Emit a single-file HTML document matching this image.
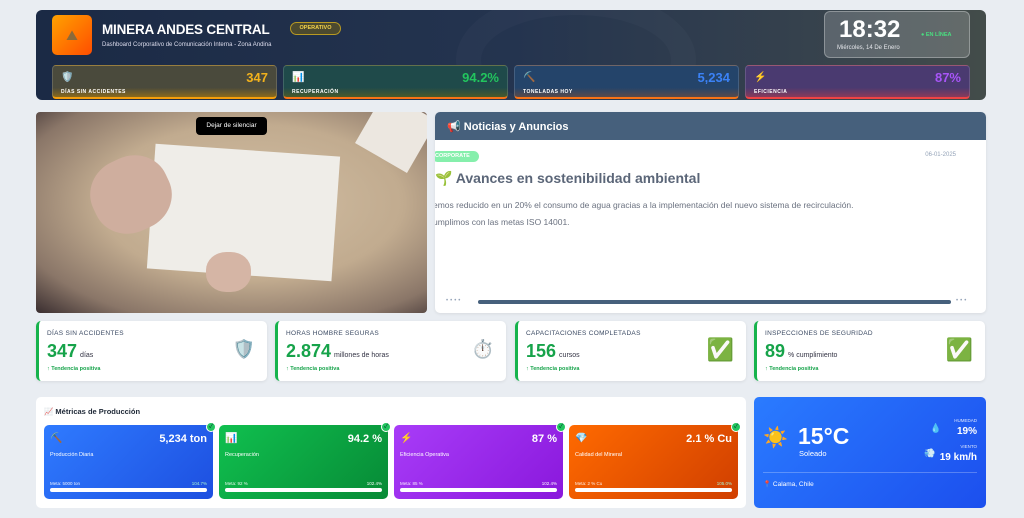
<!DOCTYPE html>
<html><head><meta charset="utf-8"><style>
*{box-sizing:border-box;margin:0;padding:0}
body{width:1024px;height:518px;overflow:hidden;background:#e9edf2;font-family:"Liberation Sans","Noto Sans CJK SC",sans-serif;position:relative}
.abs{position:absolute}
.hdr{left:36px;top:10px;width:950px;height:90px;border-radius:6px;background:linear-gradient(90deg,#1b2a45 0%,#24344f 50%,#35414d 80%,#434c4a 100%);overflow:hidden}
.stat{top:55px;height:34px;border-radius:4px;border:1px solid rgba(255,255,255,.15);color:#fff}
.stat .ic{position:absolute;left:8px;top:6px;font-size:10px}
.stat .v{position:absolute;right:8px;top:4px;font-size:13px;font-weight:bold}
.stat .l{position:absolute;left:8px;top:23px;font-size:5px;font-weight:bold;letter-spacing:.5px}
.kpi{top:321px;width:231px;height:60px;background:#fff;border-radius:5px;border-left:3px solid #16b34c;box-shadow:0 1px 3px rgba(0,0,0,.08)}
.kpi .t{position:absolute;left:8px;top:9px;font-size:6.5px;color:#3b4a63;letter-spacing:.3px}
.kpi .n{position:absolute;left:8px;top:20px;font-size:18px;font-weight:bold;color:#16a34a}
.kpi .n span{font-size:7px;font-weight:normal;color:#334;margin-left:3px}
.kpi .g{position:absolute;left:8px;top:45px;font-size:5.5px;font-weight:bold;color:#16a34a}
.kpi .e{position:absolute;right:12px;top:16px;font-size:22px}
.pc{top:425px;width:169px;height:74px;border-radius:5px;color:#fff}
.pc .ic{position:absolute;left:6px;top:8px;font-size:10px}
.pc .v{position:absolute;right:6px;top:8px;font-size:11px;font-weight:bold}
.pc .l{position:absolute;left:6px;top:27px;font-size:5.5px}
.pc .m{position:absolute;left:6px;top:56px;font-size:4.5px;opacity:.9}
.pc .p{position:absolute;right:6px;top:56px;font-size:4.5px;color:#a7f3d0}
.pc .b{position:absolute;left:6px;right:6px;top:63px;height:4px;border-radius:2px;background:#fff}
.pc .ck{position:absolute;right:-3px;top:-3px;width:10px;height:10px;border-radius:50%;background:#22c55e;border:1px solid #fff;font-size:6px;text-align:center;line-height:8px;color:#033}
</style></head><body>
<div class="abs hdr">
 <div class="abs" style="left:420px;top:-20px;width:240px;height:140px;border-radius:50%;border:25px solid rgba(255,255,255,.025)"></div>
 <div class="abs" style="left:16px;top:5px;width:40px;height:40px;border-radius:5px;background:linear-gradient(135deg,#ffa200,#ff4d00);text-align:center;line-height:40px;font-size:14px;color:#8a6a3a">⛰</div>
 <div class="abs" style="left:66px;top:12px;color:#fff;font-size:13.5px;font-weight:bold;letter-spacing:-.2px">MINERA ANDES CENTRAL</div>
 <div class="abs" style="left:254px;top:12px;width:51px;height:13px;border-radius:7px;border:1px solid #b89a22;background:rgba(120,100,20,.5);color:#f5d34a;font-size:5.5px;font-weight:bold;text-align:center;line-height:11px">OPERATIVO</div>
 <div class="abs" style="left:66px;top:32px;color:#dde;font-size:6px">Dashboard Corporativo de Comunicación Interna - Zona Andina</div>
 <div class="abs" style="left:788px;top:1px;width:146px;height:47px;border-radius:6px;background:rgba(255,255,255,.18);border:1px solid rgba(255,255,255,.3)">
  <div class="abs" style="left:14px;top:4px;color:#fff;font-size:24px;font-weight:bold">18:32</div>
  <div class="abs" style="left:96px;top:20px;color:#4ade80;font-size:5.5px;font-weight:bold">● EN LÍNEA</div>
  <div class="abs" style="left:12px;top:33px;color:#e5e7eb;font-size:6px">Miércoles, 14 De Enero</div>
 </div>
 <div class="abs stat" style="left:16px;width:225px;background:linear-gradient(180deg,#4a4a3c 70%,#8a6a1c);border-bottom:2px solid #f59e0b"><span class="ic">🛡️</span><span class="v" style="color:#f2b21c">347</span><span class="l">DÍAS SIN ACCIDENTES</span></div>
 <div class="abs stat" style="left:247px;width:225px;background:linear-gradient(180deg,#1f4a4a 70%,#4a5a2a);border-bottom:2px solid #f97316"><span class="ic">📊</span><span class="v" style="color:#22c55e">94.2%</span><span class="l">RECUPERACIÓN</span></div>
 <div class="abs stat" style="left:478px;width:225px;background:linear-gradient(180deg,#24446a 70%,#5a4a4a);border-bottom:2px solid #f97316"><span class="ic">⛏️</span><span class="v" style="color:#3b82f6">5,234</span><span class="l">TONELADAS HOY</span></div>
 <div class="abs stat" style="left:709px;width:225px;background:linear-gradient(180deg,#4a3a70 70%,#8a3a5a);border-bottom:2px solid #ef4444"><span class="ic">⚡</span><span class="v" style="color:#a855f7">87%</span><span class="l">EFICIENCIA</span></div>
</div>

<div class="abs" style="left:36px;top:112px;width:391px;height:201px;border-radius:4px;overflow:hidden;background:radial-gradient(ellipse at 55% 45%,#d2bfa4 0%,#c1ab8f 50%,#8a7668 80%,#3a2e30 100%)">
 <div class="abs" style="left:115px;top:38px;width:185px;height:125px;background:#efede8;transform:rotate(4deg)"></div>
 <div class="abs" style="left:330px;top:-10px;width:60px;height:60px;background:#ece7e0;transform:rotate(30deg)"></div>
 <div class="abs" style="left:55px;top:45px;width:80px;height:75px;border-radius:45%;background:#cfae9e;transform:rotate(-25deg)"></div>
 <div class="abs" style="left:170px;top:140px;width:45px;height:40px;border-radius:45%;background:#d5b5a5"></div>
 <div class="abs" style="left:160px;top:5px;width:71px;height:18px;border-radius:4px;background:#000;color:#fff;font-size:6.5px;text-align:center;line-height:18px">Dejar de silenciar</div>
</div>

<div class="abs" style="left:435px;top:112px;width:551px;height:201px;border-radius:5px;background:#fff;overflow:hidden;box-shadow:0 1px 3px rgba(0,0,0,.08)">
 <div style="height:28px;background:#46607c;color:#fff;font-size:11px;font-weight:bold;padding:8px 0 0 12px">📢 Noticias y Anuncios</div>
 <div class="abs" style="left:-3px;top:39px;width:47px;height:11px;border-radius:6px;background:#86efac;color:#fff;font-size:5.5px;font-weight:bold;line-height:11px;padding-left:3px">CORPORATE</div>
 <div class="abs" style="right:30px;top:40px;font-size:6px;color:#94a3b8">06-01-2025</div>
 <div class="abs" style="left:0;top:58px;font-size:14px;font-weight:bold;color:#5b6678">🌱 Avances en sostenibilidad ambiental</div>
 <div class="abs" style="left:-2px;top:85px;width:560px;font-size:8.5px;line-height:17px;color:#6b7280">emos reducido en un 20% el consumo de agua gracias a la implementación del nuevo sistema de recirculación.<br>umplimos con las metas ISO 14001.</div>
 <div class="abs" style="left:11px;top:186px;font-size:6px;color:#94a3b8;letter-spacing:2px">••••</div>
 <div class="abs" style="left:43px;top:188px;width:473px;height:4px;border-radius:2px;background:#46607c"></div>
 <div class="abs" style="left:521px;top:186px;font-size:6px;color:#94a3b8;letter-spacing:2px">•••</div>
</div>

<div class="abs kpi" style="left:36px"><span class="t">DÍAS SIN ACCIDENTES</span><span class="n">347<span>días</span></span><span class="g">↑ Tendencia positiva</span><span class="e" style="font-size:18px;top:18px">🛡️</span></div>
<div class="abs kpi" style="left:275px"><span class="t">HORAS HOMBRE SEGURAS</span><span class="n">2.874<span>millones de horas</span></span><span class="g">↑ Tendencia positiva</span><span class="e" style="font-size:18px;top:18px">⏱️</span></div>
<div class="abs kpi" style="left:515px"><span class="t">CAPACITACIONES COMPLETADAS</span><span class="n">156<span>cursos</span></span><span class="g">↑ Tendencia positiva</span><span class="e">✅</span></div>
<div class="abs kpi" style="left:754px"><span class="t">INSPECCIONES DE SEGURIDAD</span><span class="n">89<span>% cumplimiento</span></span><span class="g">↑ Tendencia positiva</span><span class="e">✅</span></div>

<div class="abs" style="left:36px;top:397px;width:710px;height:111px;background:#fff;border-radius:5px">
 <div class="abs" style="left:8px;top:10px;font-size:7.5px;font-weight:bold;color:#1f2937">📈 Métricas de Producción</div>
</div>
<div class="abs pc" style="left:44px;background:linear-gradient(135deg,#2f7bff,#1d4fe0)"><span class="ic">⛏️</span><span class="v">5,234 ton</span><span class="l">Producción Diaria</span><span class="m">Meta: 5000 ton</span><span class="p">104.7%</span><span class="b"></span><span class="ck">✓</span></div>
<div class="abs pc" style="left:219px;background:linear-gradient(135deg,#10c04f,#078a36)"><span class="ic">📊</span><span class="v">94.2 %</span><span class="l">Recuperación</span><span class="m">Meta: 92 %</span><span class="p" style="color:#fff">102.4%</span><span class="b"></span><span class="ck">✓</span></div>
<div class="abs pc" style="left:394px;background:linear-gradient(135deg,#a83cf8,#8a18dc)"><span class="ic">⚡</span><span class="v">87 %</span><span class="l">Eficiencia Operativa</span><span class="m">Meta: 85 %</span><span class="p" style="color:#fff">102.4%</span><span class="b"></span><span class="ck">✓</span></div>
<div class="abs pc" style="left:569px;background:linear-gradient(135deg,#ff6a00,#d03f00)"><span class="ic">💎</span><span class="v">2.1 % Cu</span><span class="l">Calidad del Mineral</span><span class="m">Meta: 2 % Cu</span><span class="p">105.0%</span><span class="b"></span><span class="ck">✓</span></div>

<div class="abs" style="left:754px;top:397px;width:232px;height:111px;border-radius:5px;background:linear-gradient(135deg,#2a7bff,#1c4fee);color:#fff">
 <div class="abs" style="left:9px;top:28px;font-size:20px">☀️</div>
 <div class="abs" style="left:44px;top:26px;font-size:23px;font-weight:bold">15°C</div>
 <div class="abs" style="left:45px;top:52px;font-size:7.5px">Soleado</div>
 <div class="abs" style="right:9px;top:21px;font-size:4.5px;opacity:.85">HUMEDAD</div>
 <div class="abs" style="left:176px;top:26px;font-size:9px">💧</div>
 <div class="abs" style="right:9px;top:29px;font-size:10px;font-weight:bold">19%</div>
 <div class="abs" style="right:9px;top:47px;font-size:4.5px;opacity:.85">VIENTO</div>
 <div class="abs" style="left:170px;top:51px;font-size:9px">💨</div>
 <div class="abs" style="right:9px;top:55px;font-size:10px;font-weight:bold">19 km/h</div>
 <div class="abs" style="left:9px;right:9px;top:75px;height:1px;background:rgba(255,255,255,.25)"></div>
 <div class="abs" style="left:9px;top:83px;font-size:6.5px">📍 Calama, Chile</div>
</div>
</body></html>
